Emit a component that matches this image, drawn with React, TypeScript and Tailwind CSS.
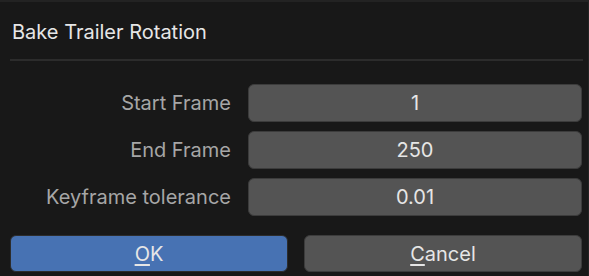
import React from "react";

const rows = [
  { label: "Start Frame", value: "1" },
  { label: "End Frame", value: "250" },
  { label: "Keyframe tolerance", value: "0.01" },
];

export default function App() {
  return (
    <div
      className="w-[589px] h-[276px] bg-[#181818] border-t-2 border-r border-[#232323] flex flex-col overflow-hidden"
      style={{ fontFamily: "Inter, 'Noto Sans', sans-serif" }}
    >
      {/* Title */}
      <div className="pl-[12px] pt-[18px] h-[57px] text-[20px] leading-[24px] text-[#e6e6e6]">
        Bake Trailer Rotation
      </div>
      <div className="ml-[10px] mr-[5px] h-[2px] bg-[#2c2c2c]" />

      {/* Properties */}
      <div className="flex flex-col gap-[9px] pt-[23px] pr-[6px]">
        {rows.map((r) => (
          <div key={r.label} className="flex items-center">
            <div className="w-[248px] pr-[17px] text-right text-[20px] leading-[24px] text-[#a6a6a6]">
              {r.label}
            </div>
            <div className="flex-1 h-[38px] rounded-[6px] bg-[#545454] border border-[#3c3c3c] flex items-center justify-center text-[20px] text-[#e6e6e6]">
              {r.value}
            </div>
          </div>
        ))}
      </div>

      {/* Buttons */}
      <div className="flex gap-[16px] pl-[10px] pr-[6px] pt-[19px]">
        <button className="flex-1 h-[37px] rounded-[6px] bg-[#4772b3] border border-[#2c2c2c] text-[20px] text-[#e6e6e6]">
          <span className="underline underline-offset-[3px]">O</span>K
        </button>
        <button className="flex-1 h-[37px] rounded-[6px] bg-[#545454] border border-[#3c3c3c] text-[20px] text-[#e6e6e6]">
          <span className="underline underline-offset-[3px]">C</span>ancel
        </button>
      </div>
    </div>
  );
}
